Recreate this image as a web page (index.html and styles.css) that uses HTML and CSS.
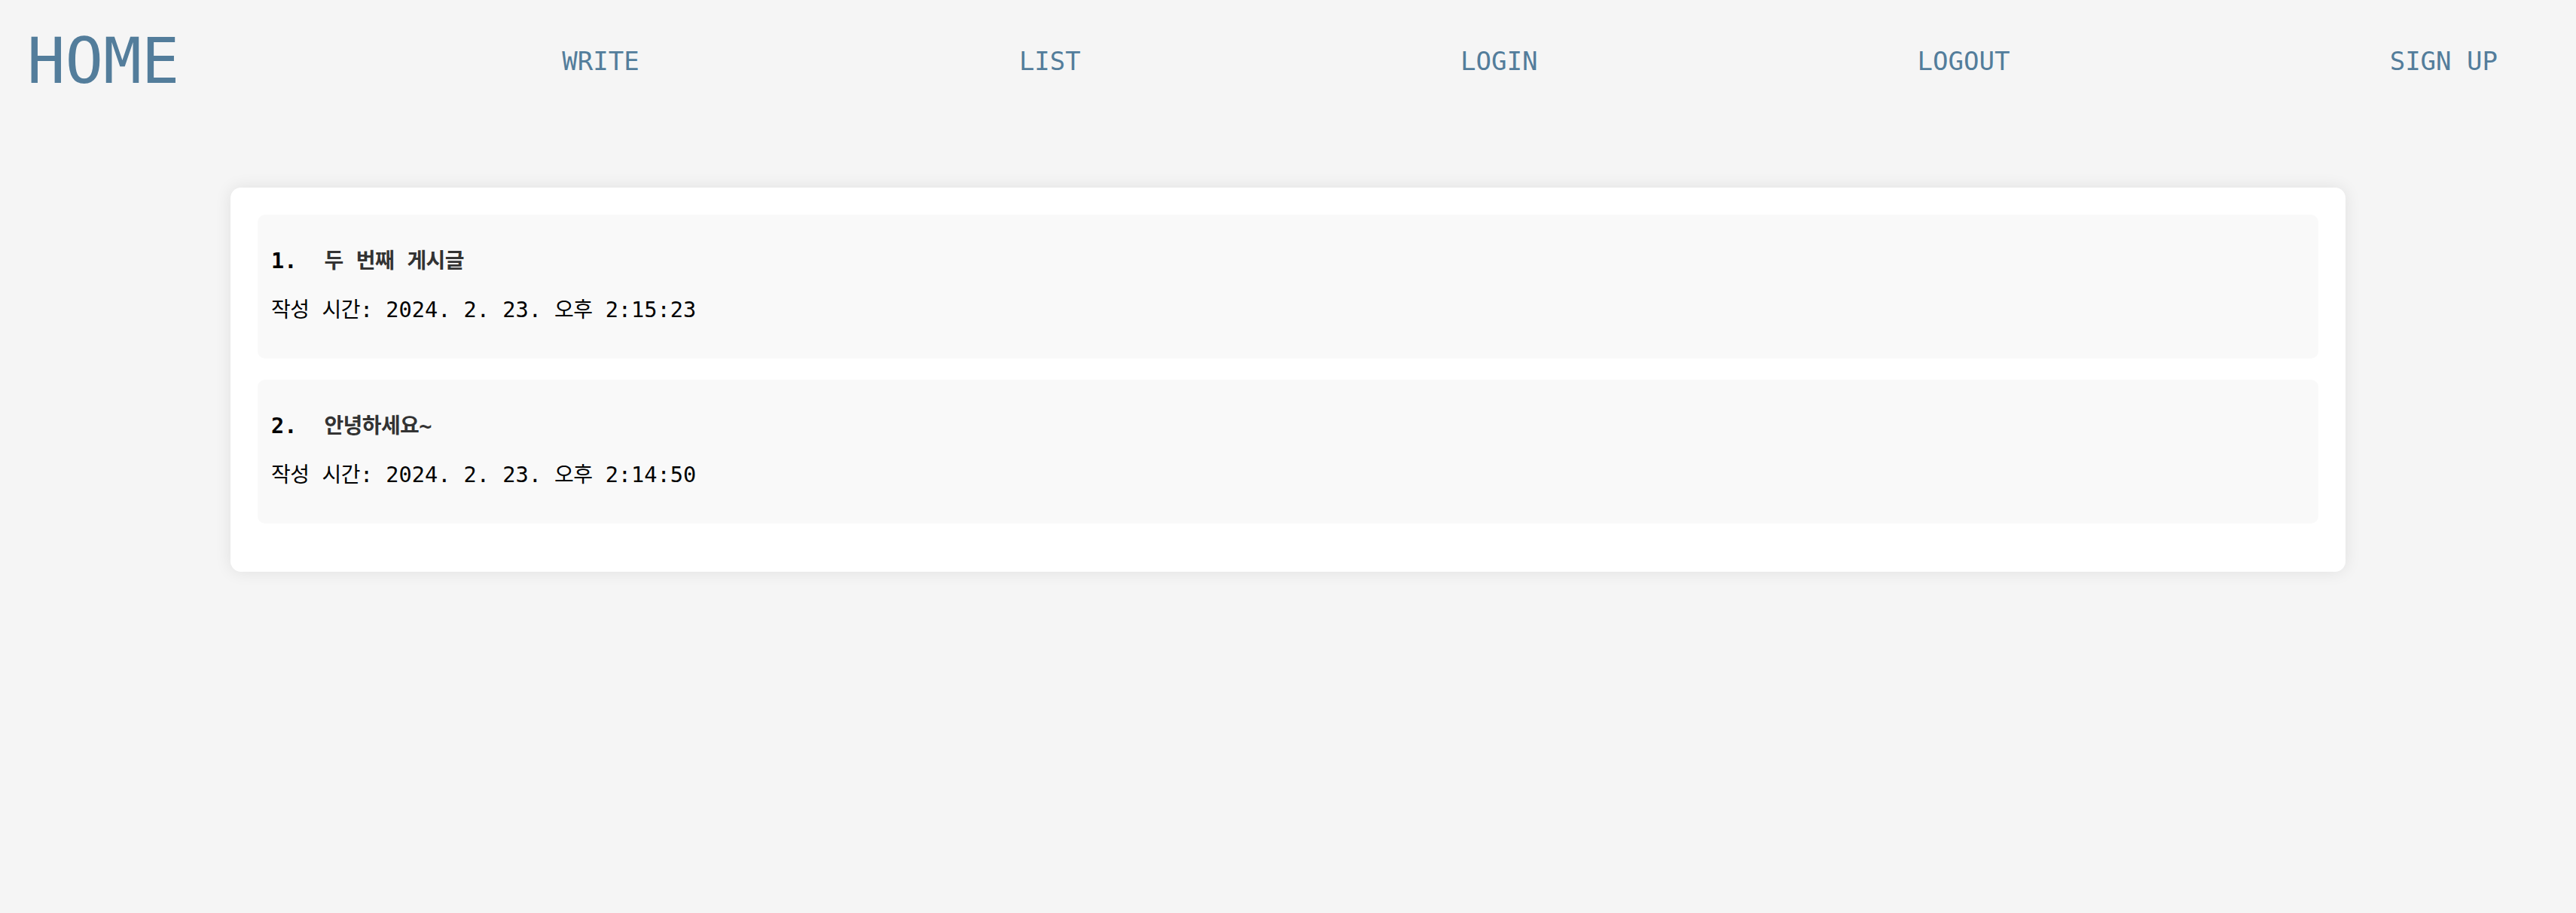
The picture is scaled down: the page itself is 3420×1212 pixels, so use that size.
FILE: index.html
```html
<!DOCTYPE html>
<html lang="ko">
<head>
<meta charset="utf-8">
<title>HOME</title>
<link rel="stylesheet" href="styles.css">
</head>
<body>
<header class="header">
  <a class="logo" href="#">HOME</a>
  <nav class="nav">
    <a class="nav-link" href="#">WRITE</a>
    <a class="nav-link" href="#">LIST</a>
    <a class="nav-link" href="#">LOGIN</a>
    <a class="nav-link" href="#">LOGOUT</a>
    <a class="nav-link" href="#">SIGN UP</a>
  </nav>
</header>
<main class="main">
  <section class="card">
    <article class="post">
      <p class="post-title"><span class="num">1.</span><span class="title"><span class="ko">두</span> <span class="ko">번째</span> <span class="ko">게시글</span></span></p>
      <p class="post-date"><span class="ko">작성</span> <span class="ko">시간</span>: 2024. 2. 23. <span class="ko">오후</span> 2:15:23</p>
    </article>
    <article class="post">
      <p class="post-title"><span class="num">2.</span><span class="title"><span class="ko">안녕하세요</span>~</span></p>
      <p class="post-date"><span class="ko">작성</span> <span class="ko">시간</span>: 2024. 2. 23. <span class="ko">오후</span> 2:14:50</p>
    </article>
  </section>
</main>
</body>
</html>
```
FILE: styles.css
```css
* { box-sizing: border-box; }

html, body {
  margin: 0;
  padding: 0;
}

body {
  background: #f5f5f5;
  font-family: "DejaVu Sans Mono", "Noto Sans CJK KR", monospace;
  color: #000;
  min-height: 1212px;
}

.header {
  display: flex;
  align-items: center;
  padding: 32px 104px 0 36px;
}

.logo {
  font-size: 84px;
  line-height: normal;
  color: #537d9b;
  text-decoration: none;
}

.nav {
  flex: 1;
  display: flex;
  justify-content: space-between;
  align-items: center;
  margin-left: 508px;
}

.nav-link {
  font-size: 34px;
  line-height: normal;
  color: #537d9b;
  text-decoration: none;
}

.main {
  padding-top: 119px;
}

.card {
  width: 2808px;
  margin: 0 auto;
  background: #fff;
  border-radius: 14px;
  padding: 36px;
  box-shadow: 0 0 22px rgba(0, 0, 0, 0.09);
}

.post {
  background: #f9f9f9;
  border-radius: 10px;
  padding: 42px 18px 48px;
  margin-bottom: 28px;
  display: flex;
  flex-direction: column;
  gap: 29px;
}

.post p {
  margin: 0;
  font-size: 28.6px;
  line-height: 34px;
}

.post-title {
  font-weight: 700;
}

.num {
  color: #000;
}

.title {
  margin-left: 36px;
  color: #333;
}

.ko {
  font-family: "Noto Sans CJK KR", sans-serif;
  font-size: 28px;
  letter-spacing: -0.6px;
}

.post-title .ko {
  font-weight: 700;
}
```
